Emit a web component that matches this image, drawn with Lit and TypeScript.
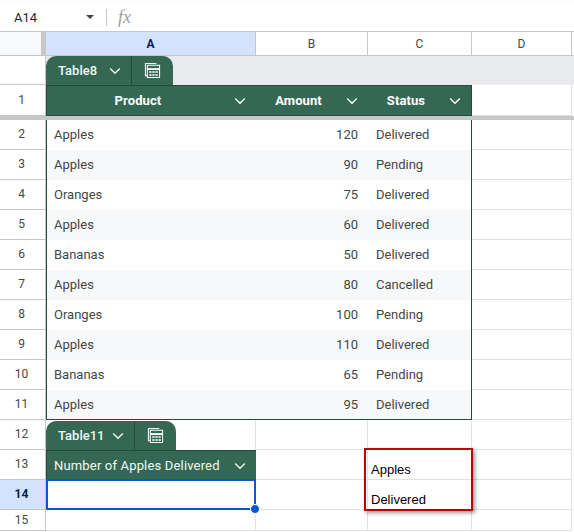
import { LitElement, html, css } from "lit";
import { customElement } from "lit/decorators.js";

const rows: [string, string, string][] = [
  ["Apples", "120", "Delivered"],
  ["Apples", "90", "Pending"],
  ["Oranges", "75", "Delivered"],
  ["Apples", "60", "Delivered"],
  ["Bananas", "50", "Delivered"],
  ["Apples", "80", "Cancelled"],
  ["Oranges", "100", "Pending"],
  ["Apples", "110", "Delivered"],
  ["Bananas", "65", "Pending"],
  ["Apples", "95", "Delivered"],
];

const chevron = html`<svg class="chev" width="12" height="8" viewBox="0 0 12 8"><path d="M1.2 1.4 6 6.2l4.8-4.8" fill="none" stroke="currentColor" stroke-width="1.4"/></svg>`;
const tableIcon = html`<svg width="17" height="17" viewBox="0 0 18 18" fill="none" stroke="#fff" stroke-width="1.1"><path d="M3.5 14.5H1.5V1.5H13"/><path d="M3.5 3.5H16.5V16.5H3.5Z"/><path d="M3.5 7.5H16.5" stroke-width="2"/><path d="M5.5 10.5h2.5M8.8 10.5h2.5M12.1 10.5h2.5M5.5 13.7h2.5M8.8 13.7h2.5M12.1 13.7h2.5" stroke-width="1.6"/></svg>`;

@customElement("app-root")
export class AppRoot extends LitElement {
  static styles = css`
    :host {
      display: block;
      width: 574px;
      height: 532px;
      overflow: hidden;
      background: #fff;
      font-family: Roboto, "Liberation Sans", sans-serif;
      font-size: 13px;
      color: #444746;
    }
    .top { height: 3px; background: #f9fbfd; }
    .fbar {
      height: 28px;
      display: flex;
      align-items: center;
      border-bottom: 1px solid #c7c7c7;
      color: #1f1f1f;
      font-size: 13px;
    }
    .name { width: 85px; padding-left: 14px; box-sizing: border-box; }
    .caret { width: 0; height: 0; border: 4px solid transparent; border-top: 4px solid #444746; border-bottom: 0; margin-right: 3px; margin-left: 1px; }
    .sep { width: 1px; height: 17px; background: #c7c7c7; margin-left: 9px; }
    .fx { margin-left: 11px; font: italic 18px "Liberation Serif", serif; color: #a0a0a0; }
    .sheet {
      position: relative;
      display: grid;
      grid-template-columns: 46px 210px 112px 104px 100px 2px;
      grid-template-rows: 24px 29px 35px repeat(10, 30px) 30px 30px 30px 21px;
      height: 500px;
    }
    .c {
      box-sizing: border-box;
      border-right: 1px solid #e1e1e1;
      border-bottom: 1px solid #e1e1e1;
      display: flex;
      align-items: center;
      padding: 0 8px;
      min-width: 0;
      white-space: nowrap;
    }
    .end { border: 0; }
    .ch {
      justify-content: center;
      border-color: #c7c7c7;
      font-size: 12px;
      padding: 0;
    }
    .ch.end { border-right: 0; border-bottom: 1px solid #c7c7c7; }
    .corner {
      background: #f8f9fa;
      border-right: 5px solid #c7c7c7;
      border-bottom-color: #c7c7c7;
    }
    .ch.sel { background: #d3e3fd; color: #0b1f4d; font-weight: 700; }
    .rh {
      justify-content: center;
      border-right-color: #c7c7c7;
      border-bottom-color: #c7c7c7;
      font-size: 12px;
      padding: 0 2px 1px 0;
      color: #444746;
    }
    .rh.sel { background: #d3e3fd; color: #0b1f4d; font-weight: 700; }
    .tabband {
      grid-column: 2 / span 5;
      background: #e8eaed;
      align-items: flex-end;
      border-bottom: 0;
      border-right: 0;
      padding: 0;
    }
    .plain { padding: 0; align-items: flex-end; border-bottom: 0; }
    .tab {
      background: #356854;
      color: #f1f5f3;
      height: 29px;
      border-radius: 10px 10px 0 0;
      display: flex;
      align-items: stretch;
      font-weight: 500;
      font-size: 13px;
    }
    .t1 {
      display: flex;
      align-items: center;
      justify-content: space-between;
      box-sizing: border-box;
      padding: 0 10px 0 12px;
      border-right: 1px solid #234a3b;
    }
    .t8 { width: 86px; }
    .t11 { width: 89px; }
    .t2 { display: flex; align-items: center; justify-content: center; width: 41px; padding-right: 1px; box-sizing: border-box; }
    .t2 svg { margin-bottom: 1px; }
    .chev { flex: none; }
    .top31 { height: 31px; align-self: start; }
    .head {
      background: #356854;
      color: #fff;
      font-weight: 700;
      border-top: 1px solid #234a3b;
      border-bottom: 1px solid #234a3b;
      border-right: 0;
      padding: 0 10px 0 8px;
      letter-spacing: 0.1px;
    }
    .head .lbl { flex: 1; text-align: center; padding-right: 13px; }
    .head.first { border-left: 1px solid #234a3b; }
    .head.last { border-right: 1px solid #234a3b; }
    .freeze {
      position: absolute;
      left: 0;
      right: 0;
      top: 84px;
      height: 4px;
      background: #c7c7c7;
    }
    .body { color: #444746; border-right: 0; border-bottom: 0; padding-bottom: 2px; }
    .alt { background: #f6f8f9; }
    .body.a { border-left: 1px solid #234a3b; padding-left: 7px; }
    .body.n { justify-content: flex-end; padding-right: 10px; }
    .body.s { border-right: 1px solid #234a3b; }
    .body.endrow { border-bottom: 1px solid #234a3b; padding-bottom: 1px; }
    .head2 {
      font-weight: 400;
      color: #f4f7f5;
      justify-content: space-between;
      padding: 0 10px 0 7px;
      background: #356854;
      border: 0;
      border-left: 1px solid #234a3b;
      border-top: 1px solid #234a3b;
      letter-spacing: 0.17px;
    }
    .active {
      border: 2px solid #0b57d0;
      position: relative;
      margin-top: -1px;
    }
    .handle {
      position: absolute;
      right: -6px;
      bottom: -6px;
      width: 8px;
      height: 8px;
      border-radius: 50%;
      background: #0b57d0;
      border: 1px solid #fff;
      z-index: 2;
    }
    .callout {
      position: absolute;
      left: 364px;
      top: 416px;
      width: 109px;
      height: 63px;
      box-sizing: border-box;
      border: 2px solid #c00000;
      box-shadow: 2px 2px 4px rgba(0,0,0,0.4);
      z-index: 3;
      color: #000;
      font-family: "Liberation Sans", Arial, sans-serif;
      font-size: 13px;
      padding: 5px 0 0 5px;
      line-height: 30px;
    }
    .callout span { display: block; }
  `;

  render() {
    const cols = ["A", "B", "C", "D"];
    const blanks = html`<div class="c"></div><div class="c"></div><div class="c"></div><div class="c end"></div>`;
    return html`
      <div class="top"></div>
      <div class="fbar">
        <div class="name">A14</div>
        <div class="caret"></div>
        <div class="sep"></div>
        <div class="fx">fx</div>
      </div>
      <div class="sheet">
        <div class="c ch corner"></div>
        ${cols.map((c, i) => html`<div class="c ch ${i === 0 ? "sel" : ""}">${c}</div>`)}
        <div class="c ch end"></div>

        <div class="c rh"></div>
        <div class="c tabband">
          <div class="tab">
            <div class="t1 t8">Table8 ${chevron}</div>
            <div class="t2">${tableIcon}</div>
          </div>
        </div>

        <div class="c rh top31">1</div>
        <div class="c head first top31"><span class="lbl">Product</span>${chevron}</div>
        <div class="c head top31"><span class="lbl">Amount</span>${chevron}</div>
        <div class="c head last top31"><span class="lbl">Status</span>${chevron}</div>
        <div class="c top31"></div>
        <div class="c end top31"></div>

        ${rows.map((r, i) => {
          const alt = i % 2 === 1 ? "alt" : "";
          const end = i === rows.length - 1 ? "endrow" : "";
          return html`
            <div class="c rh">${i + 2}</div>
            <div class="c body a ${alt} ${end}">${r[0]}</div>
            <div class="c body n ${alt} ${end}">${r[1]}</div>
            <div class="c body s ${alt} ${end}">${r[2]}</div>
            <div class="c"></div>
            <div class="c end"></div>
          `;
        })}

        <div class="c rh">12</div>
        <div class="c plain">
          <div class="tab">
            <div class="t1 t11">Table11 ${chevron}</div>
            <div class="t2">${tableIcon}</div>
          </div>
        </div>
        ${blanks}

        <div class="c rh">13</div>
        <div class="c head2">Number of Apples Delivered ${chevron}</div>
        ${blanks}

        <div class="c rh sel">14</div>
        <div class="c active"><div class="handle"></div></div>
        ${blanks}

        <div class="c rh">15</div>
        <div class="c"></div>
        ${blanks}

        <div class="freeze"></div>
        <div class="callout"><span>Apples</span><span>Delivered</span></div>
      </div>
    `;
  }
}
